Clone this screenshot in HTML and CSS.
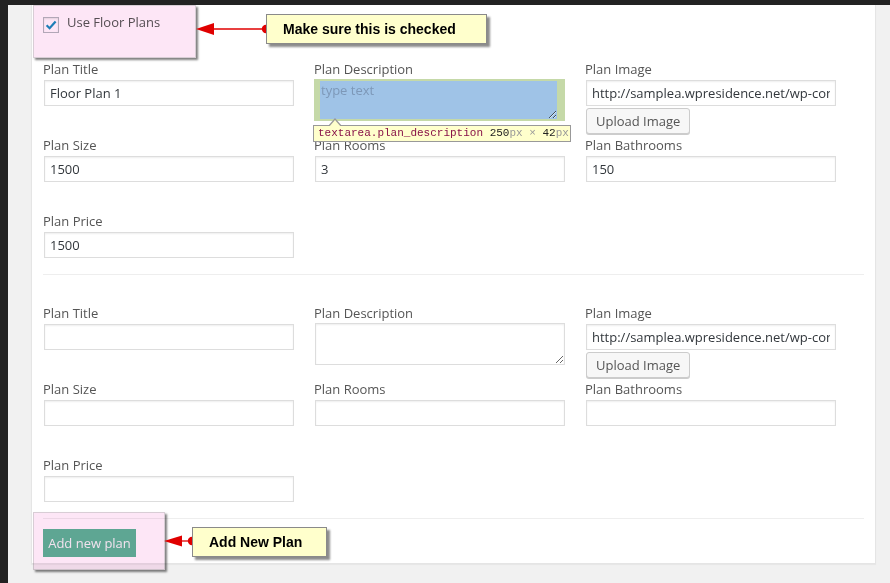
FILE: index.html
```html
<!DOCTYPE html>
<html>
<head>
<meta charset="utf-8">
<link rel="stylesheet" href="styles.css">
</head>
<body>
<div class="topbar"></div>
<div class="layout">
  <div class="adminmenu"></div>
  <div class="content">
    <div class="panel">
      <label class="use-plans">
        <span class="cb"><svg width="14" height="14" viewBox="0 0 14 14"><polyline points="2.6,7.2 5.6,10.2 11.6,3.4" fill="none" stroke="#1e8cbe" stroke-width="2.2"/></svg></span>
        <span class="use-text">Use Floor Plans</span>
      </label>

      <div class="plan">
        <div class="row">
          <div class="field"><label>Plan Title</label><input type="text" value="Floor Plan 1"></div>
          <div class="field"><label>Plan Description</label><textarea class="plan_description inspected" placeholder="type text"></textarea></div>
          <div class="field"><label>Plan Image</label><input type="text" value="http://samplea.wpresidence.net/wp-content/uploads/plan.jpg"><button class="upload">Upload Image</button></div>
        </div>
        <div class="row">
          <div class="field"><label>Plan Size</label><input type="text" value="1500"></div>
          <div class="field"><label>Plan Rooms</label><input type="text" value="3"></div>
          <div class="field"><label>Plan Bathrooms</label><input type="text" value="150"></div>
        </div>
        <div class="row last">
          <div class="field"><label>Plan Price</label><input type="text" value="1500"></div>
        </div>
      </div>
      <hr class="sep">

      <div class="plan">
        <div class="row">
          <div class="field"><label>Plan Title</label><input type="text" value=""></div>
          <div class="field"><label>Plan Description</label><textarea class="plan_description"></textarea></div>
          <div class="field"><label>Plan Image</label><input type="text" value="http://samplea.wpresidence.net/wp-content/uploads/plan.jpg"><button class="upload">Upload Image</button></div>
        </div>
        <div class="row">
          <div class="field"><label>Plan Size</label><input type="text" value=""></div>
          <div class="field"><label>Plan Rooms</label><input type="text" value=""></div>
          <div class="field"><label>Plan Bathrooms</label><input type="text" value=""></div>
        </div>
        <div class="row last">
          <div class="field"><label>Plan Price</label><input type="text" value=""></div>
        </div>
      </div>
      <hr class="sep sep-last">
      <button class="add">Add new plan</button>
    </div>
  </div>
</div>

<div class="devtip"><span class="sel">textarea.plan_description</span> <span class="num">250</span><span class="unit">px</span> <span class="unit">×</span> <span class="num">42</span><span class="unit">px</span></div>

<div class="hl hl-top"></div>
<div class="hl hl-bottom"></div>

<svg class="arrow arrow-top" width="76" height="16" viewBox="0 0 76 16"><line x1="18" y1="8" x2="71" y2="8" stroke="#e00000" stroke-width="1.3"/><polygon points="1,8 19,2 19,14" fill="#e00000"/><circle cx="71" cy="8" r="4.2" fill="#e00000"/></svg>
<div class="callout callout-top">Make sure this is checked</div>

<svg class="arrow arrow-bottom" width="34" height="16" viewBox="0 0 34 16"><line x1="17" y1="8" x2="29" y2="8" stroke="#e00000" stroke-width="1.3"/><polygon points="1,8 19,2.5 19,13.5" fill="#e00000"/><circle cx="29" cy="8" r="4.2" fill="#e00000"/></svg>
<div class="callout callout-bottom">Add New Plan</div>
</body>
</html>
```

FILE: styles.css
```css
* { box-sizing: border-box; }

html, body {
  margin: 0;
  padding: 0;
}

body {
  background: #f1f1f1;
  font-family: "Open Sans", "Liberation Sans", sans-serif;
  font-size: 13px;
  color: #555;
  width: 890px;
  height: 583px;
  overflow: hidden;
}

.topbar {
  height: 5px;
  background: #222;
}

.layout {
  display: flex;
  height: 578px;
}

.adminmenu {
  width: 8px;
  background: #222;
  flex: none;
}

.content {
  flex: 1;
  padding: 0 14px 0 23px;
}

.panel {
  background: #fff;
  border: 1px solid #e5e5e5;
  border-top: 0;
  box-shadow: 0 1px 1px rgba(0, 0, 0, 0.04);
  padding: 8px 11px 6px 11px;
}

.use-plans {
  display: flex;
  align-items: flex-start;
  height: 20px;
}

.cb {
  width: 16px;
  height: 16px;
  margin-top: 4px;
  margin-right: 8px;
  border: 1px solid #b4b9be;
  background: #fff;
  box-shadow: inset 0 1px 2px rgba(0, 0, 0, 0.1);
  display: flex;
  align-items: center;
  justify-content: center;
}

.cb svg { display: block; }

.use-text {
  line-height: 18px;
  color: #555;
}

.plan { margin-top: 27px; }
.plan + .sep + .plan { margin-top: 0; }

.row {
  display: flex;
  gap: 19px;
  height: 76px;
}

.row.last { height: auto; }

.field {
  width: 252px;
  display: flex;
  flex-direction: column;
  align-items: flex-start;
}

.field label {
  display: block;
  line-height: 18px;
  height: 18px;
  color: #555;
}

.field input {
  width: 250px;
  height: 26px;
  margin: 2px 1px 0 1px;
  padding: 0 5px;
  border: 1px solid #ddd;
  box-shadow: inset 0 1px 2px rgba(0, 0, 0, 0.07);
  font-family: "Open Sans", "Liberation Sans", sans-serif;
  font-size: 13px;
  line-height: 18px;
  color: #32373c;
  background: #fff;
  outline: none;
}

.field textarea {
  width: 250px;
  height: 42px;
  margin: 1px 1px 0 1px;
  padding: 2px 6px;
  border: 1px solid #ddd;
  box-shadow: inset 0 1px 2px rgba(0, 0, 0, 0.07);
  font-family: "Open Sans", "Liberation Sans", sans-serif;
  font-size: 13px;
  line-height: 18px;
  color: #32373c;
  background: #fff;
  outline: none;
}

.field textarea.inspected {
  width: 251px;
  margin-left: 0;
  border-style: solid;
  border-width: 2px 8px 2px 6px;
  border-color: #c5d9a8;
  background: #9fc3e7;
  box-shadow: none;
  padding: 0 1px;
}

.field textarea.inspected::placeholder {
  color: #7d98b8;
}

.upload {
  margin: 2px 0 0 1px;
  height: 26px;
  padding: 0 9px;
  border: 1px solid #ccc;
  border-radius: 3px;
  background: #f7f7f7;
  box-shadow: 0 1px 0 #ccc;
  font-family: "Open Sans", "Liberation Sans", sans-serif;
  font-size: 13px;
  color: #555;
  line-height: 24px;
}

.sep {
  border: 0;
  border-top: 1px solid #eee;
  height: 0;
  margin: 16px 0 29px 0;
}

.sep.sep-last { margin-bottom: 10px; }

.add {
  display: block;
  width: 93px;
  height: 28px;
  padding: 0;
  border: 0;
  background: #5fb898;
  color: #f4fbf8;
  font-family: "Open Sans", "Liberation Sans", sans-serif;
  font-size: 13px;
}

/* Devtools tooltip */
.devtip {
  position: absolute;
  left: 313px;
  top: 125px;
  width: 258px;
  height: 17px;
  background: #ffffcc;
  border: 1px solid #999;
  font-family: "Liberation Mono", "DejaVu Sans Mono", monospace;
  font-size: 11px;
  line-height: 15px;
  padding: 0 0 0 4px;
  white-space: nowrap;
}

.devtip::before {
  content: "";
  position: absolute;
  left: 14px;
  top: -8px;
  border: 7px solid transparent;
  border-top-width: 0;
  border-bottom: 8px solid #999;
}

.devtip::after {
  content: "";
  position: absolute;
  left: 15px;
  top: -6px;
  border: 6px solid transparent;
  border-top-width: 0;
  border-bottom: 7px solid #ffffcc;
}

.devtip .sel { color: #881248; }
.devtip .num { color: #222; }
.devtip .unit { color: #999; }

/* Annotation highlights */
.hl {
  position: absolute;
  background: #fde6f6;
  mix-blend-mode: multiply;
  border: 1px solid #d8cdd5;
  box-shadow: 2px 2px 2px rgba(0, 0, 0, 0.5);
}

.hl-top {
  left: 33px;
  top: 5px;
  width: 163px;
  height: 53px;
}

.hl-bottom {
  left: 33px;
  top: 512px;
  width: 132px;
  height: 58px;
}

.arrow {
  position: absolute;
  display: block;
}

.arrow-top {
  left: 195px;
  top: 21px;
}

.arrow-bottom {
  left: 163px;
  top: 533px;
}

.callout {
  position: absolute;
  background: #ffffcc;
  border: 1px solid #8a8a8a;
  box-shadow: 3px 3px 2px rgba(0, 0, 0, 0.45);
  font-family: "Liberation Sans", Arial, sans-serif;
  font-weight: bold;
  font-size: 14px;
  color: #000;
  display: flex;
  align-items: center;
  padding-left: 16px;
}

.callout-top {
  left: 266px;
  top: 14px;
  width: 221px;
  height: 30px;
}

.callout-bottom {
  left: 192px;
  top: 527px;
  width: 135px;
  height: 30px;
  padding-left: 16px;
}
```
